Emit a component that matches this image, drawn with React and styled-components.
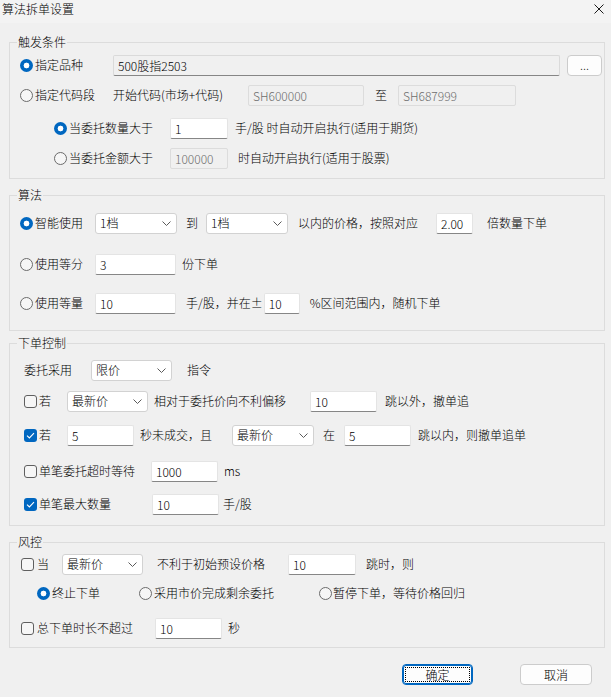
import React from "react";
import styled, { createGlobalStyle, css } from "styled-components";

const GlobalStyle = createGlobalStyle`
  html, body {
    margin: 0;
    padding: 0;
    background: #f0f0f0;
  }
  body {
    font-family: "Noto Sans CJK SC", "Microsoft YaHei", sans-serif;
    font-size: 12px;
    font-weight: 300;
    color: #000;
  }
  * {
    box-sizing: border-box;
  }
`;

const Dialog = styled.div`
  width: 611px;
  height: 697px;
  background: #f0f0f0;
  overflow: hidden;
`;

const TitleBar = styled.div`
  height: 23px;
  display: flex;
  align-items: center;
  justify-content: space-between;
  padding: 0 7px 5px 2px;
  background: #f3f3f3;
`;

const Title = styled.span`
  font-size: 12px;
  line-height: 16px;
`;

const Body = styled.div`
  padding: 0 6px 0 9px;
`;

const Group = styled.fieldset`
  margin: ${(p) => p.$mt}px 0 0;
  padding: 0 0 ${(p) => p.$pb}px;
  border: 1px solid #dcdcdc;
  min-width: 0;
`;

const Legend = styled.legend`
  margin-left: 7px;
  padding: 0 1px;
  height: 16px;
  font-size: 12px;
  line-height: 16px;
`;

const Row = styled.div`
  display: flex;
  align-items: center;
  height: 22px;
  margin-top: ${(p) => p.$mt || 0}px;
  padding-left: ${(p) => p.$pl || 0}px;
  white-space: nowrap;
`;

const Text = styled.span`
  flex: none;
  width: ${(p) => (p.$w ? `${p.$w}px` : "auto")};
  margin-left: ${(p) => p.$ml || 0}px;
  line-height: 16px;
`;

const Field = styled.input`
  flex: none;
  width: ${(p) => p.$w}px;
  height: 21px;
  margin: 0 0 0 ${(p) => p.$ml || 0}px;
  padding: 0 4px;
  font: inherit;
  font-size: 12px;
  color: #000;
  background: #fff;
  border: 1px solid #e4e4e4;
  border-bottom-color: #868686;
  border-radius: 2px;
  outline: none;

  ${(p) =>
    p.$flat &&
    css`
      background: #f0f0f0;
      border-color: #dadada;
      border-bottom-color: #868686;
    `}

  &:disabled {
    background: #f0f0f0;
    border-color: #dcdcdc;
    color: #6d6d6d;
  }
`;

const Combo = styled.div`
  flex: none;
  display: flex;
  align-items: center;
  justify-content: space-between;
  width: ${(p) => p.$w}px;
  height: 21px;
  margin-left: ${(p) => p.$ml || 0}px;
  padding: 0 5px 0 4px;
  background: #fff;
  border: 1px solid #d2d2d2;
  border-radius: 3px;
  line-height: 16px;
`;

const Radio = styled.span`
  flex: none;
  width: 13px;
  height: 13px;
  margin-left: ${(p) => p.$ml || 0}px;
  border-radius: 50%;
  ${(p) =>
    p.$on
      ? css`
          background: radial-gradient(circle at center, #fff 2.6px, #0067c0 3.2px);
        `
      : css`
          background: #f6f6f6;
          border: 1px solid #6b6b6b;
        `}
`;

const Check = styled.span`
  flex: none;
  display: flex;
  align-items: center;
  justify-content: center;
  width: 13px;
  height: 13px;
  border-radius: 3px;
  ${(p) =>
    p.$on
      ? css`
          background: #0067c0;
        `
      : css`
          background: #f6f6f6;
          border: 1px solid #5f5f5f;
        `}
`;

const Button = styled.button`
  flex: none;
  position: relative;
  width: ${(p) => p.$w}px;
  height: 21px;
  margin-left: ${(p) => p.$ml || 0}px;
  padding: 0;
  font: inherit;
  font-size: 12px;
  line-height: 16px;
  color: #000;
  background: #fdfdfd;
  border: 1px solid #cccccc;
  border-radius: 4px;

  ${(p) =>
    p.$default &&
    css`
      border-color: #0067c0;
      box-shadow: inset 0 0 0 1px #0067c0;
      &::after {
        content: "";
        position: absolute;
        inset: 2px;
        border: 1px dotted #000;
      }
    `}
`;

const Footer = styled.div`
  display: flex;
  justify-content: flex-end;
  gap: 47px;
  margin-top: 16px;
  padding-right: 19px;
`;

const Chevron = () => (
  <svg width="9" height="5" viewBox="0 0 9 5">
    <polyline points="0.5,0.5 4.5,4.5 8.5,0.5" fill="none" stroke="#5a5a5a" strokeWidth="1" />
  </svg>
);

const Tick = () => (
  <svg width="9" height="7" viewBox="0 0 9 7">
    <polyline points="1,3.6 3.4,6 8,1.2" fill="none" stroke="#fff" strokeWidth="1.1" />
  </svg>
);

const Select = ({ w, ml, children }) => (
  <Combo $w={w} $ml={ml}>
    <span>{children}</span>
    <Chevron />
  </Combo>
);

const Box = ({ on }) => <Check $on={on}>{on && <Tick />}</Check>;

export default function App() {
  return (
    <Dialog>
      <GlobalStyle />
      <TitleBar>
        <Title>算法拆单设置</Title>
        <svg width="10" height="10" viewBox="0 0 10 10">
          <path d="M0.5 0.5 L9.5 9.5 M9.5 0.5 L0.5 9.5" stroke="#1a1a1a" strokeWidth="1" />
        </svg>
      </TitleBar>

      <Body>
        <Group $mt={11} $pb={9}>
          <Legend>触发条件</Legend>
          <Row $mt={4} $pl={10}>
            <Radio $on />
            <Text $ml={2} $w={78}>指定品种</Text>
            <Field $w={447} $flat readOnly defaultValue="500股指2503" />
            <Button $w={35} $ml={7}>...</Button>
          </Row>
          <Row $mt={8} $pl={10}>
            <Radio />
            <Text $ml={2} $w={78}>指定代码段</Text>
            <Text $w={135}>开始代码(市场+代码)</Text>
            <Field $w={116} disabled defaultValue="SH600000" />
            <Text $ml={11} $w={23}>至</Text>
            <Field $w={118} disabled defaultValue="SH687999" />
          </Row>
          <Row $mt={11} $pl={44}>
            <Radio $on />
            <Text $ml={2} $w={101}>当委托数量大于</Text>
            <Field $w={58} defaultValue="1" />
            <Text $ml={7}>手/股 时自动开启执行(适用于期货)</Text>
          </Row>
          <Row $mt={8} $pl={44}>
            <Radio />
            <Text $ml={2} $w={101}>当委托金额大于</Text>
            <Field $w={58} disabled defaultValue="100000" />
            <Text $ml={10}>时自动开启执行(适用于股票)</Text>
          </Row>
        </Group>

        <Group $mt={8} $pb={16}>
          <Legend>算法</Legend>
          <Row $mt={9} $pl={10}>
            <Radio $on />
            <Text $ml={2} $w={60}>智能使用</Text>
            <Select w={82}>1档</Select>
            <Text $ml={9} $w={20}>到</Text>
            <Select w={82}>1档</Select>
            <Text $ml={10} $w={138}>以内的价格，按照对应</Text>
            <Field $w={37} defaultValue="2.00" />
            <Text $ml={14}>倍数量下单</Text>
          </Row>
          <Row $mt={19} $pl={10}>
            <Radio />
            <Text $ml={2} $w={60}>使用等分</Text>
            <Field $w={81} defaultValue="3" />
            <Text $ml={6}>份下单</Text>
          </Row>
          <Row $mt={17} $pl={10}>
            <Radio />
            <Text $ml={2} $w={60}>使用等量</Text>
            <Field $w={81} defaultValue="10" />
            <Text $ml={10}>手/股，并在±</Text>
            <Field $w={36} $ml={1} defaultValue="10" />
            <Text $ml={10}>%区间范围内，随机下单</Text>
          </Row>
        </Group>

        <Group $mt={4} $pb={10}>
          <Legend>下单控制</Legend>
          <Row $mt={8} $pl={14}>
            <Text $w={67}>委托采用</Text>
            <Select w={81}>限价</Select>
            <Text $ml={15}>指令</Text>
          </Row>
          <Row $mt={9} $pl={14}>
            <Box />
            <Text $ml={2} $w={28}>若</Text>
            <Select w={81}>最新价</Select>
            <Text $ml={6} $w={156}>相对于委托价向不利偏移</Text>
            <Field $w={67} defaultValue="10" />
            <Text $ml={8}>跳以外，撤单追</Text>
          </Row>
          <Row $mt={12} $pl={14}>
            <Box on />
            <Text $ml={2} $w={28}>若</Text>
            <Field $w={67} defaultValue="5" />
            <Text $ml={6} $w={92}>秒未成交，且</Text>
            <Select w={82}>最新价</Select>
            <Text $ml={9} $w={21}>在</Text>
            <Field $w={67} defaultValue="5" />
            <Text $ml={7}>跳以内，则撤单追单</Text>
          </Row>
          <Row $mt={14} $pl={14}>
            <Box />
            <Text $ml={2} $w={112}>单笔委托超时等待</Text>
            <Field $w={67} defaultValue="1000" />
            <Text $ml={6}>ms</Text>
          </Row>
          <Row $mt={11} $pl={14}>
            <Box on />
            <Text $ml={2} $w={113}>单笔最大数量</Text>
            <Field $w={67} defaultValue="10" />
            <Text $ml={4}>手/股</Text>
          </Row>
        </Group>

        <Group $mt={8} $pb={8}>
          <Legend>风控</Legend>
          <Row $mt={3} $pl={11}>
            <Box />
            <Text $ml={3} $w={25}>当</Text>
            <Select w={81}>最新价</Select>
            <Text $ml={14} $w={131}>不利于初始预设价格</Text>
            <Field $w={68} defaultValue="10" />
            <Text $ml={10}>跳时，则</Text>
          </Row>
          <Row $mt={7} $pl={27}>
            <Radio $on />
            <Text $ml={2} $w={87}>终止下单</Text>
            <Radio />
            <Text $ml={2} $w={165}>采用市价完成剩余委托</Text>
            <Radio />
            <Text $ml={1}>暂停下单，等待价格回归</Text>
          </Row>
          <Row $mt={13} $pl={11}>
            <Box />
            <Text $ml={3} $w={118}>总下单时长不超过</Text>
            <Field $w={67} defaultValue="10" />
            <Text $ml={6}>秒</Text>
          </Row>
        </Group>
      </Body>

      <Footer>
        <Button $w={71} $default>确定</Button>
        <Button $w={72}>取消</Button>
      </Footer>
    </Dialog>
  );
}
